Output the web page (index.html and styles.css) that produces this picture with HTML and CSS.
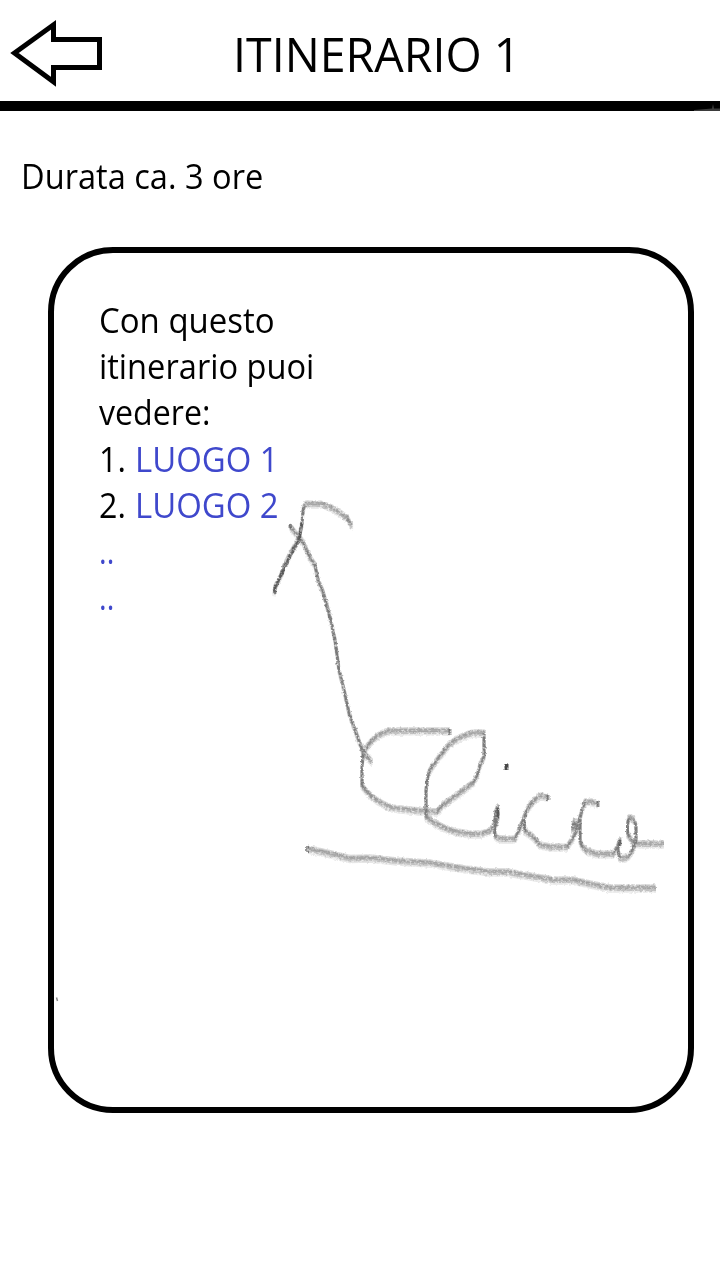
FILE: index.html
```html
<!DOCTYPE html>
<html lang="it">
<head>
<meta charset="utf-8">
<title>Itinerario 1</title>
<link rel="stylesheet" href="styles.css">
</head>
<body>
<header class="header">
  <svg class="back" viewBox="0 0 96 72" role="img" aria-label="Indietro"><path d="M6.500 36 45.500 7.800V22.500H91.500V50.500H45.500V64.800Z"/></svg>
  <h1 class="title">ITINERARIO 1</h1>
  <svg class="fleck" viewBox="0 0 26 8" aria-hidden="true"><path d="M0 7 18 5.500 19 1 20 5.500H26V8H0Z"/></svg>
</header>
<main class="main">
  <p class="duration">Durata ca. 3 ore</p>
  <section class="card">
    <p class="intro"><span class="line first">Con questo</span><span class="line">itinerario puoi</span><span class="line vedere">vedere:</span></p>
    <ul class="places">
      <li><span class="num">1.</span><a class="place">LUOGO 1</a></li>
      <li><span class="num">2.</span><a class="place">LUOGO 2</a></li>
      <li class="more"><span class="dots">..</span></li>
      <li class="more"><span class="dots">..</span></li>
    </ul>
  </section>
</main>
<svg class="sketch" viewBox="0 0 720 1280" aria-hidden="true">
  <defs>
    <filter id="grain" x="0" y="0" width="720" height="1280" filterUnits="userSpaceOnUse">
      <feTurbulence type="fractalNoise" baseFrequency="0.4" numOctaves="2" seed="4" result="n"/>
      <feOffset in="SourceGraphic" dx="-0.500" dy="-0.500" result="s"/>
      <feDisplacementMap in="s" in2="n" scale="3" xChannelSelector="R" yChannelSelector="G" result="d"/>
      <feColorMatrix in="n" values="0 0 0 0 0 0 0 0 0 0 0 0 0 0 0 0 0 2 0 0" result="m"/>
      <feComposite in="d" in2="m" operator="in"/>
      <feGaussianBlur stdDeviation="0.350"/>
    </filter>
    <g id="stroke">
      <path d="M290 526 297 535 303 542 310 558 315 565 318 580 323 592 330 617 335 640 339 670 344 690 349 713 355 730 363 752 372 762"/>
      <path d="M274 593 275 587 282 573 284 566 293 549 299 538 302 523 303 511Q304 504 307 504L322 504 332 508 340 513 347 518 352 526"/>
      <path d="M450 731H390Q374 734 363.500 752L362 767V786Q371 798 383 804 392 809 401 809L420 811 437 812 443 805 457 795 473 783Q477 777 478 773L480 765 484 757V733H473Q459 736 448 746L437 760Q430 769 428 775L426 790V817Q440 828 457 832L470 834H481L490 831 494 826 495 815 497.500 807 498 818 494.500 828 495 836Q498 839 502 839H515L520 828 527 810Q534 798 541 796L548 797"/>
      <path d="M523.500 817 525 831 533 837 540 845 550 847H567L573 838 578 828 577 822Q573 820 572.500 829L579 822 582 810 585 802H592L598 804"/>
      <path d="M580 817V841Q582 848 587 851L597 854H613L617 848 620 840 617.500 850 620 858Q628 860 632 851L636 840V826Q634 817 629 818L627.500 824V833Q631 844 641 844H664"/>
      <path d="M308 849 327 853 350 858.500 370 858 397 861 430 863 463 868.500 490 872H507L530 876 553 880H573L590 884 610 888H656"/>
    </g>
  </defs>
  <g class="pencil" filter="url(#grain)">
    <use href="#stroke" y="-2.200"/><use href="#stroke" y="-1"/><use href="#stroke"/><use href="#stroke" y="1.500"/><use class="soft" href="#stroke" y="3.200"/>
    <path class="tick" d="M290 524V529M450 728V735M548 795V800M598 801V807M307.500 846V852M302 523 299 541 290 556 283 571 275 588V594M498 808V817M620 840V846"/>
    <path class="dot" d="M506.500 764V770"/>
  </g>
  <path class="speck" d="M56.500 997.500 57.500 1001"/>
</svg>
</body>
</html>
```
FILE: styles.css
```css
* { box-sizing: border-box; }
body {
  margin: 0;
  min-height: 1280px;
  position: relative;
  overflow: hidden;
  background: #fff;
  color: #000;
  font: 35px/46.200px "Open Sans", "Noto Sans", sans-serif;
}
.header {
  position: relative;
  display: flex;
  height: 111px;
  padding: 17px 0 0 8px;
  border-bottom: 10px solid #000;
}
.back { width: 96px; height: 72px; }
.back path { fill: none; stroke: #000; stroke-width: 5; stroke-miterlimit: 10; }
.title {
  margin: 4px 0 0 129px;
  font-size: 48px;
  line-height: 66px;
  font-weight: 400;
  white-space: nowrap;
  transform: scaleX(.97);
  transform-origin: left;
}
.fleck { position: absolute; right: 0; bottom: -10px; width: 26px; height: 8px; fill: #777; opacity: .5; }
.main { padding: 42.400px 26px 0 48px; }
.duration {
  margin: 0 0 47.400px -27.500px;
  white-space: nowrap;
  transform: scaleX(.931);
  transform-origin: left;
}
.card {
  height: 866px;
  padding: 44px 45px;
  border: 6px solid #000;
  border-radius: 65px;
  white-space: nowrap;
}
.intro { margin: 0; }
.line { display: block; transform: scaleX(.932); transform-origin: left; }
.first { transform: scaleX(.942); }
.vedere { transform: scaleX(.918); }
.places { margin: 0; padding: 0; list-style: none; }
.places li { display: flex; }
.num { width: 36px; transform: scaleX(.92); transform-origin: left; }
.place { transform: scaleX(.94); transform-origin: left; }
.dots { transform: scaleX(.83); transform-origin: left; }
.place, .more { color: #3f48cc; }
.sketch { position: absolute; left: 0; top: 0; width: 720px; height: 1280px; pointer-events: none; }
.pencil { fill: none; stroke: #333; stroke-width: 3; stroke-linejoin: round; }
.pencil use { opacity: .2; }
.pencil .soft { opacity: .12; }
.tick { opacity: .5; }
.dot { stroke-width: 4; opacity: .9; }
.speck { stroke: #888; stroke-width: 1.500; }
```
